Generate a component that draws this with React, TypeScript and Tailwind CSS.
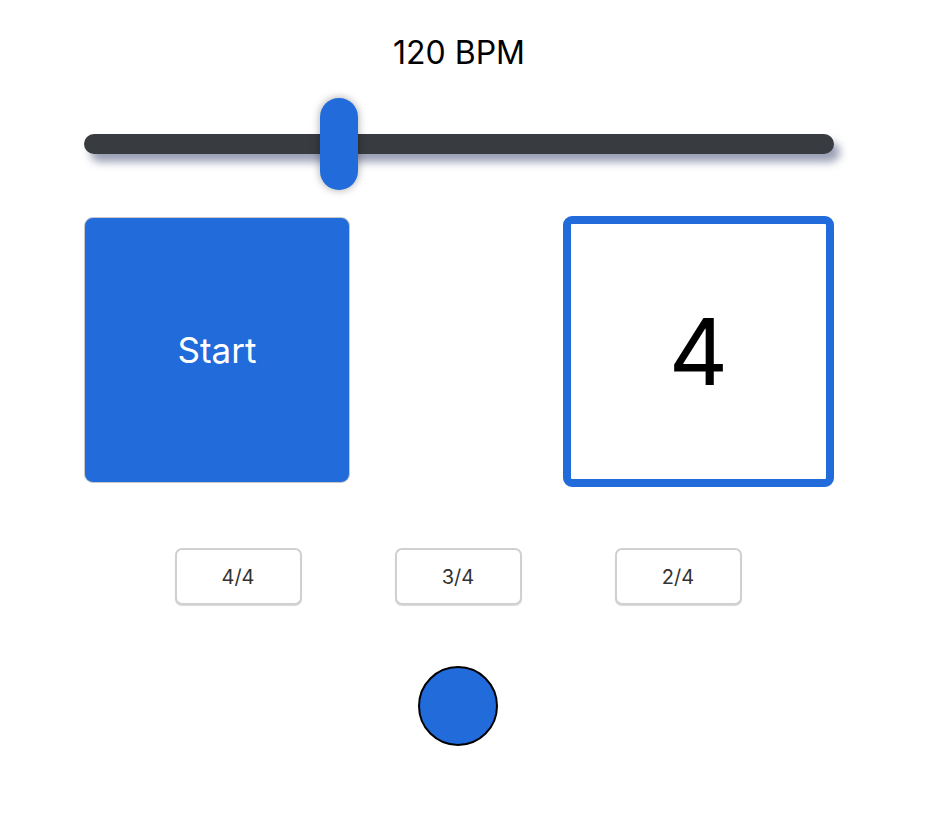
import { useState } from 'react'

const signatures = ['4/4', '3/4', '2/4']

function App() {
  const [running, setRunning] = useState(false)

  return (
    <div className="min-h-screen bg-white font-['Inter','Liberation_Sans',sans-serif] text-black">
      <div className="ml-[84px] flex w-[750px] flex-col items-center pt-[35px]">
        <div className="text-[32px] leading-[36px]">120 BPM</div>

        <div className="relative mt-[27px] flex h-[92px] w-full items-center">
          <div className="h-[20px] w-full rounded-full bg-[#383b40] shadow-[6px_8px_8px_rgba(70,80,120,0.55)]" />
          <div className="absolute left-[236px] top-0 h-[92px] w-[38px] rounded-full bg-[#216bdb] shadow-[0_0_8px_rgba(0,0,0,0.35)]" />
        </div>

        <div className="mt-[26px] flex w-full items-start justify-between">
          <button
            type="button"
            onClick={() => setRunning(!running)}
            className="mt-px flex h-[266px] w-[266px] items-center justify-center rounded-[9px] border border-[#c8c8c8] bg-[#216bdb] text-[35px] text-white"
          >
            {running ? 'Stop' : 'Start'}
          </button>
          <div className="flex h-[271px] w-[271px] items-center justify-center rounded-[9px] border-[8px] border-[#216bdb] text-[92px] leading-none">
            4
          </div>
        </div>

        <div className="mt-[61px] -ml-[2px] flex gap-[93px]">
          {signatures.map((s) => (
            <button
              key={s}
              type="button"
              className="h-[57px] w-[127px] rounded-[7px] border-2 border-[#d0d0d0] bg-white text-[20px] text-[#333] shadow-[0_1px_1px_rgba(0,0,0,0.15)]"
            >
              {s}
            </button>
          ))}
        </div>

        <div className="mt-[61px] -ml-[2px] h-[80px] w-[80px] rounded-full border-2 border-black bg-[#216bdb]" />
      </div>
    </div>
  )
}

export default App
